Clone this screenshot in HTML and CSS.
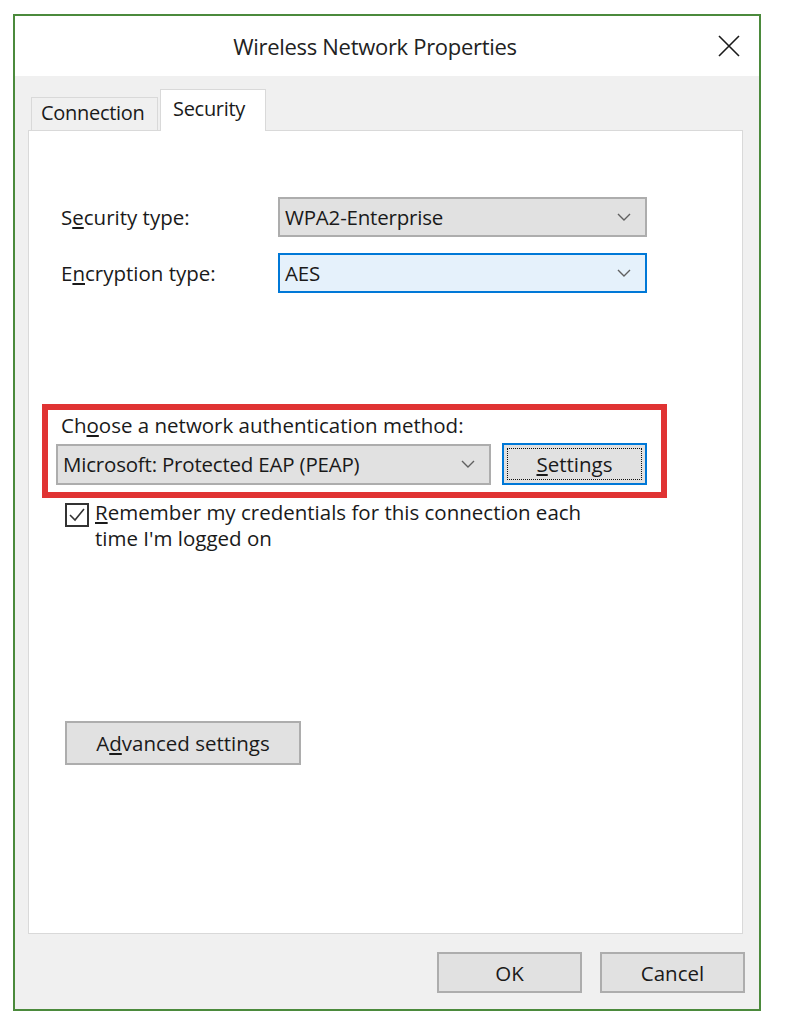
FILE: index.html
```html
<!DOCTYPE html>
<html>
  <head>
    <meta charset="utf-8">
    <title>Wireless Network Properties</title>
    <link rel="stylesheet" href="styles.css">
  </head>
  <body>
    <div class="dialog">
      <div class="titlebar">
        <span class="title">Wireless Network Properties</span>
        <svg class="close" width="22" height="22" viewBox="0 0 22 22">
          <path d="M1 1 L21 21 M21 1 L1 21" stroke="#1a1a1a" stroke-width="1.6" fill="none"/>
        </svg>
      </div>
      <div class="client">
        <div class="tabs">
          <div class="tab">Connection</div>
          <div class="tab active">Security</div>
        </div>
        <div class="panel">
          <div class="row">
            <label class="label">S<u>e</u>curity type:</label>
            <div class="select">
              <span>WPA2-Enterprise</span>
              <svg class="chev" width="14" height="8" viewBox="0 0 14 8"><path d="M1 1 L7 7 L13 1" stroke="#606060" stroke-width="1.4" fill="none"/></svg>
            </div>
          </div>
          <div class="row">
            <label class="label">E<u>n</u>cryption type:</label>
            <div class="select focused">
              <span>AES</span>
              <svg class="chev" width="14" height="8" viewBox="0 0 14 8"><path d="M1 1 L7 7 L13 1" stroke="#606060" stroke-width="1.4" fill="none"/></svg>
            </div>
          </div>

          <div class="highlight">
            <div class="auth-label">Ch<u>o</u>ose a network authentication method:</div>
            <div class="auth-row">
              <div class="select method">
                <span>Microsoft: Protected EAP (PEAP)</span>
                <svg class="chev" width="14" height="8" viewBox="0 0 14 8"><path d="M1 1 L7 7 L13 1" stroke="#606060" stroke-width="1.4" fill="none"/></svg>
              </div>
              <button class="btn default"><span class="focus"><u>S</u>ettings</span></button>
            </div>
          </div>

          <div class="check-row">
            <span class="checkbox">
              <svg width="20" height="20" viewBox="0 0 20 20"><path d="M3 10 L8 15 L17 4" stroke="#333" stroke-width="1.6" fill="none"/></svg>
            </span>
            <span class="check-text"><u>R</u>emember my credentials for this connection each<br>time I'm logged on</span>
          </div>

          <button class="btn advanced">A<u>d</u>vanced settings</button>
        </div>
        <div class="footer">
          <button class="btn footer-btn">OK</button>
          <button class="btn footer-btn">Cancel</button>
        </div>
      </div>
    </div>
  </body>
</html>
```

FILE: styles.css
```css
body {
  margin: 0;
  background: #fff;
  font-family: "Open Sans", "Noto Sans", sans-serif;
  color: #1a1a1a;
}
.dialog {
  margin: 14px 0 0 13px;
  width: 744px;
  height: 993px;
  border: 2px solid #4b8a3c;
  display: flex;
  flex-direction: column;
}
.titlebar {
  height: 60px;
  background: #fff;
  position: relative;
  display: flex;
  align-items: center;
  justify-content: center;
}
.title {
  font-size: 22px;
  letter-spacing: -0.3px;
  color: #222;
  margin-right: 24px;
}
.close {
  position: absolute;
  right: 19px;
  top: 19px;
}
.client {
  flex: 1;
  background: #f0f0f0;
  display: flex;
  flex-direction: column;
  padding: 13px 16px 15px 13px;
}
.tabs {
  display: flex;
  align-items: flex-end;
  padding-left: 3px;
  height: 41px;
}
.tab {
  height: 33px;
  box-sizing: border-box;
  border: 1px solid #d9d9d9;
  border-bottom: none;
  background: #f0f0f0;
  font-size: 20px;
  padding: 1px 0 0 9px;
  width: 127px;
  letter-spacing: -0.3px;
}
.tab.active {
  height: 42px;
  width: 106px;
  background: #fff;
  margin-left: 2px;
  padding: 5px 0 0 12px;
  margin-bottom: -1px;
  position: relative;
}
.panel {
  background: #fff;
  border: 1px solid #d9d9d9;
  height: 804px;
  box-sizing: border-box;
  padding: 66px 0 0 0;
  display: flex;
  flex-direction: column;
}
.row {
  display: flex;
  align-items: center;
  padding-left: 32px;
  margin-bottom: 16px;
}
.label {
  width: 217px;
  font-size: 20.5px;
}
.select {
  width: 369px;
  height: 40px;
  box-sizing: border-box;
  border: 2px solid #adadad;
  background: #e1e1e1;
  display: flex;
  align-items: center;
  justify-content: space-between;
  padding: 0 14px 0 5px;
  font-size: 20.5px;
  letter-spacing: -0.2px;
}
.select.focused {
  border-color: #0078d7;
  background: #e5f1fb;
}
.highlight {
  margin: 95px 0 0 13px;
  width: 625px;
  height: 94px;
  box-sizing: border-box;
  border: 6px solid #e03333;
  padding: 2px 0 0 8px;
}
.auth-label {
  font-size: 20.5px;
  padding-left: 5px;
  line-height: 27px;
}
.auth-row {
  display: flex;
  align-items: center;
  gap: 11px;
  margin-top: 4px;
}
.select.method {
  width: 435px;
  height: 41px;
}
.btn {
  font-family: inherit;
  font-size: 20.5px;
  color: #1a1a1a;
  background: #e1e1e1;
  border: 2px solid #adadad;
  padding: 0;
  box-sizing: border-box;
}
.btn.default {
  width: 145px;
  height: 42px;
  border-color: #0078d7;
  padding: 3px;
}
.focus {
  display: flex;
  align-items: center;
  justify-content: center;
  height: 100%;
  border: 1px dotted #111;
  box-sizing: border-box;
}
.check-row {
  display: flex;
  align-items: flex-start;
  padding-left: 36px;
  margin-top: 4px;
}
.checkbox {
  width: 24px;
  height: 24px;
  box-sizing: border-box;
  border: 2px solid #333;
  background: #fff;
  display: flex;
  align-items: center;
  justify-content: center;
  margin-right: 6px;
  margin-top: 1px;
}
.check-text {
  font-size: 20.5px;
  line-height: 26px;
  margin-top: -3px;
}
.advanced {
  margin: 170px 0 0 36px;
  width: 236px;
  height: 44px;
  text-align: center;
}
.footer {
  display: flex;
  justify-content: flex-end;
  gap: 18px;
  margin-top: 18px;
  margin-right: -2px;
}
.footer-btn {
  width: 145px;
  height: 41px;
}
```
